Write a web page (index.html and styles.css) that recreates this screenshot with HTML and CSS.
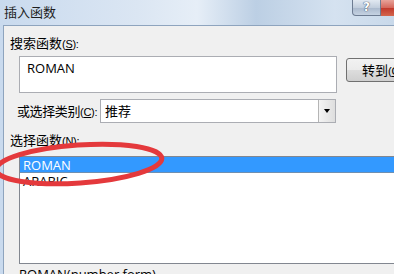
FILE: index.html
```html
<!DOCTYPE html>
<html lang="zh-CN">
<head>
  <meta charset="UTF-8">
  <title>插入函数</title>
  <link rel="stylesheet" href="styles.css">
</head>
<body>
<div class="window">
  <div class="titlebar">
    <span class="title">插入函数</span>
    <div class="caption">
      <span class="help">?</span>
      <span class="close"></span>
    </div>
  </div>

  <div class="dialog">
    <div class="label">搜索函数<span class="key">(<u>S</u>):</span></div>
    <div class="search-row">
      <div class="textbox">ROMAN</div>
      <div class="button">转到<span class="key">(<u>G</u>)</span></div>
    </div>

    <div class="category-row">
      <span class="cat-label">或选择类别<span class="key">(<u>C</u>):</span></span>
      <div class="select">
        <span class="select-text">推荐</span>
        <span class="arrow"><i></i></span>
      </div>
    </div>

    <div class="label">选择函数<span class="key">(<u>N</u>):</span></div>
    <div class="listbox">
      <div class="item selected">ROMAN</div>
      <div class="item">ARABIC</div>
    </div>
    <div class="signature">ROMAN(number,form)</div>
  </div>

  <!-- red marker drawn over the list -->
  <svg class="marker" width="394" height="274" viewBox="0 0 394 274">
    <ellipse cx="79" cy="164" rx="83" ry="19" transform="rotate(-4 79 164)"
             fill="none" stroke="#e4393c" stroke-width="5"/>
  </svg>
</div>
</body>
</html>
```

FILE: styles.css
```css
body {
  margin: 0;
  padding: 0;
  font-family: "Noto Sans CJK SC", "Open Sans", sans-serif;
  font-size: 13px;
  color: #000;
  background: #c6d7ea;
}

.window {
  position: relative;
  width: 394px;
  height: 274px;
  overflow: hidden;
  background: linear-gradient(90deg, #c9daee 0%, #dbe6f3 35%, #e6eef7 50%, #bccfe4 65%, #d5e2f0 85%, #c9d9ea 100%);
}

.titlebar {
  display: flex;
  align-items: flex-start;
  height: 25px;
}

.title {
  padding: 2px 0 0 4px;
  font-size: 13px;
  line-height: 20px;
  color: #1e1e1e;
}

.caption {
  display: flex;
  margin-left: auto;
}

.help {
  width: 27px;
  height: 15px;
  border: 1px solid #6d7c92;
  border-top: none;
  border-radius: 0 0 0 4px;
  background: linear-gradient(#e1e8f1, #c2cedd 50%, #a9b8cc 51%, #c5d2e2);
  text-align: center;
  font-family: "DejaVu Sans", sans-serif;
  font-size: 12px;
  font-weight: bold;
  line-height: 15px;
  color: #fff;
  text-shadow: 0 0 1px #33415a, 0 0 1px #33415a;
}

.close {
  width: 13px;
  height: 16px;
  background: linear-gradient(#e8a39a, #d4665a 50%, #c2392c 51%, #d3664d);
}

.dialog {
  height: 100%;
  margin-left: 3px;
  padding: 8px 0 0 6px;
  border-top: 1px solid #8ea4be;
  border-left: 1px solid #8ea4be;
  background: #f0f0f0;
}

.key {
  font-family: "Liberation Sans", sans-serif;
  font-size: 11px;
  letter-spacing: -0.3px;
}

.label {
  height: 18px;
  line-height: 18px;
}

.search-row {
  display: flex;
  align-items: flex-start;
  margin: 4px 0 0 9px;
}

.textbox {
  flex: none;
  width: 309px;
  height: 35px;
  padding-left: 7px;
  border: 1px solid #abadb3;
  background: #fff;
  font-family: "Open Sans", sans-serif;
  font-size: 13px;
  line-height: 22px;
}

.button {
  flex: none;
  margin: 2px 0 0 9px;
  width: 80px;
  height: 22px;
  padding-left: 15px;
  border: 1px solid #707070;
  border-radius: 3px;
  background: linear-gradient(#f2f2f2, #ebebeb 50%, #dddddd 51%, #cfcfcf);
  line-height: 22px;
  white-space: nowrap;
}

.category-row {
  display: flex;
  align-items: center;
  height: 24px;
  margin: 6px 0 0 7px;
}

.cat-label {
  flex: none;
  width: 83px;
  white-space: nowrap;
  line-height: 18px;
  letter-spacing: -0.4px;
}

.select {
  flex: none;
  display: flex;
  justify-content: space-between;
  width: 234px;
  height: 22px;
  border: 1px solid #abadb3;
  background: #fff;
}

.select-text {
  padding-left: 4px;
  line-height: 22px;
}

.arrow {
  display: flex;
  align-items: center;
  justify-content: center;
  width: 16px;
  border-left: 1px solid #b5b5b5;
  background: linear-gradient(90deg, #f4f4f4, #dedede);
}

.arrow i {
  width: 0;
  height: 0;
  border-left: 3px solid transparent;
  border-right: 3px solid transparent;
  border-top: 4px solid #000;
}

.category-row + .label {
  margin-top: 8px;
}

.listbox {
  width: 390px;
  height: 106px;
  margin: 7px 0 0 9px;
  border: 1px solid #828790;
  border-right: none;
  background: #fff;
  font-family: "Open Sans", sans-serif;
  font-size: 13px;
}

.item {
  height: 16px;
  padding-left: 3px;
  line-height: 16px;
}

.item.selected {
  background: #3399ff;
  border-bottom: 1px solid #6f8fb0;
  height: 15px;
  color: #fff;
}

.signature {
  margin: 2px 0 0 9px;
  font-family: "Open Sans", sans-serif;
  font-size: 13px;
  line-height: 16px;
}

.marker {
  position: absolute;
  left: 0;
  top: 0;
}
```
